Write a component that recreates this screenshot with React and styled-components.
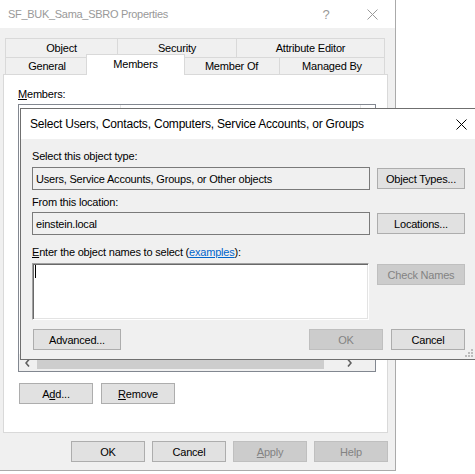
import React from "react";
import styled, { createGlobalStyle, css } from "styled-components";

const GlobalStyle = createGlobalStyle`
  html, body {
    margin: 0;
    padding: 0;
    background: #fff;
  }
  body {
    font-family: "Liberation Sans", Arial, sans-serif;
    font-size: 11px;
    letter-spacing: -0.2px;
    color: #000;
  }
`;

const Desktop = styled.div`
  position: relative;
  width: 475px;
  height: 474px;
  overflow: hidden;
  background: #fff;
`;

/* ---------- window chrome ---------- */

const PropertiesWindow = styled.div`
  position: absolute;
  left: 0;
  top: 0;
  width: 396px;
  height: 471px;
  box-sizing: border-box;
  background: #f0f0f0;
  border-right: 1px solid #aaaaaa;
  border-bottom: 1px solid #aaaaaa;
  display: flex;
  flex-direction: column;
`;

const PickerWindow = styled.div`
  position: absolute;
  left: 20px;
  top: 108px;
  width: 456px;
  height: 252px;
  box-sizing: border-box;
  background: #f0f0f0;
  border: 1px solid #6f6f6f;
  display: flex;
  flex-direction: column;
  z-index: 5;
`;

const TitleBar = styled.div`
  flex: none;
  height: ${(p) => p.$height}px;
  background: #fff;
  display: flex;
  align-items: center;
  padding-left: ${(p) => p.$pad}px;
  color: ${(p) => (p.$inactive ? "#999999" : "#000")};
  font-size: ${(p) => (p.$inactive ? "11px" : "12px")};
  letter-spacing: ${(p) => (p.$inactive ? "-0.3px" : "-0.2px")};
`;

const TitleText = styled.div`
  flex: 1;
  white-space: nowrap;
  overflow: hidden;
`;

const CaptionButton = styled.div`
  width: ${(p) => p.$w}px;
  height: 100%;
  display: flex;
  align-items: center;
  justify-content: center;
  color: #999999;
  font-size: 13px;
`;

const CloseIcon = ({ color }) => (
  <svg width="11" height="11" viewBox="0 0 11 11">
    <path d="M0.5 0.5 L10.5 10.5 M10.5 0.5 L0.5 10.5" stroke={color} strokeWidth="1" fill="none" />
  </svg>
);

/* ---------- property sheet ---------- */

const SheetBody = styled.div`
  flex: 1;
  display: flex;
  flex-direction: column;
  padding: 10px 7px 0 3px;
`;

const TabStrip = styled.div`
  margin: 0 2px;
  display: flex;
  flex-direction: column;
  position: relative;
  z-index: 1;
`;

const TabRow = styled.div`
  display: flex;
  height: ${(p) => p.$h}px;
  align-items: flex-start;
`;

const Tab = styled.div`
  box-sizing: border-box;
  width: ${(p) => p.$w}px;
  height: 100%;
  border-top: 1px solid #d9d9d9;
  border-left: 1px solid #d9d9d9;
  background: #f0f0f0;
  display: flex;
  align-items: center;
  justify-content: center;
  white-space: nowrap;
  &:last-child {
    border-right: 1px solid #d9d9d9;
  }
  ${(p) =>
    p.$active &&
    css`
      width: ${p.$w + 4}px;
      height: calc(100% + 4px);
      margin: -3px -2px 0;
      padding-bottom: 2px;
      background: #fff;
      border-right: 1px solid #d9d9d9;
      position: relative;
      z-index: 2;
    `}
`;

const TabPanel = styled.div`
  height: 359px;
  box-sizing: border-box;
  background: #fff;
  border: 1px solid #d9d9d9;
  padding: 13px 0 0 14px;
  display: flex;
  flex-direction: column;
`;

const Label = styled.div`
  height: 13px;
  line-height: 13px;
  white-space: nowrap;
  margin-top: ${(p) => p.$top || 0}px;
`;

const ListBox = styled.div`
  margin-top: 3px;
  width: 358px;
  height: 268px;
  box-sizing: border-box;
  border: 1px solid #828790;
  background: #fff;
  display: flex;
  flex-direction: column;
`;

const ListHeader = styled.div`
  height: 24px;
  flex: none;
  display: flex;
`;

const HeaderCell = styled.div`
  width: ${(p) => p.$w}px;
  box-sizing: border-box;
  border-right: 1px solid #e5e5e5;
`;

const ListRows = styled.div`
  flex: 1;
`;

const HScrollBar = styled.div`
  height: 17px;
  flex: none;
  display: flex;
  background: #f0f0f0;
`;

const ScrollArrow = styled.div`
  width: 17px;
  flex: none;
  display: flex;
  align-items: center;
  justify-content: center;
`;

const ScrollTrack = styled.div`
  flex: 1;
  display: flex;
  align-items: center;
`;

const ScrollThumb = styled.div`
  margin-left: 1px;
  width: 287px;
  height: 13px;
  background: #cdcdcd;
`;

const ScrollCorner = styled.div`
  width: 17px;
  flex: none;
  background: #f0f0f0;
`;

const Chevron = ({ dir }) => (
  <svg width="5" height="8" viewBox="0 0 5 8">
    <path
      d={dir === "left" ? "M4 0.5 L1 4 L4 7.5" : "M1 0.5 L4 4 L1 7.5"}
      stroke="#606060"
      strokeWidth="1.6"
      fill="none"
    />
  </svg>
);

const ButtonRow = styled.div`
  display: flex;
  gap: ${(p) => p.$gap}px;
  margin-top: ${(p) => p.$top || 0}px;
  margin-left: ${(p) => p.$left || 0}px;
  justify-content: ${(p) => p.$justify || "flex-start"};
`;

const Button = styled.div`
  box-sizing: border-box;
  width: ${(p) => p.$w || 74}px;
  height: 21px;
  flex: none;
  display: flex;
  align-items: center;
  justify-content: center;
  white-space: nowrap;
  background: ${(p) => (p.$disabled ? "#cccccc" : "#e1e1e1")};
  border: 1px solid ${(p) => (p.$disabled ? "#bfbfbf" : "#adadad")};
  color: ${(p) => (p.$disabled ? "#838383" : "#000")};
  margin-top: ${(p) => p.$top || 0}px;
  margin-left: ${(p) => p.$left || 0}px;
`;

/* ---------- object picker ---------- */

const PickerBody = styled.div`
  flex: 1;
  position: relative;
  padding: 11px 10px 0 11px;
  display: flex;
  flex-direction: column;
`;

const FieldRow = styled.div`
  display: flex;
  gap: 7px;
  align-items: ${(p) => p.$align || "center"};
  margin-top: ${(p) => p.$top || 0}px;
`;

const ReadOnlyBox = styled.div`
  box-sizing: border-box;
  width: 338px;
  height: 23px;
  border: 1px solid #7a7a7a;
  background: #f0f0f0;
  padding-left: 3px;
  display: flex;
  align-items: center;
  white-space: nowrap;
`;

const NamesBox = styled.div`
  box-sizing: border-box;
  width: 337px;
  height: 57px;
  background: #fff;
  border: 1px solid;
  border-color: #a0a0a0 #ffffff #ffffff #a0a0a0;
  box-shadow: inset 1px 1px 0 #696969, inset -1px -1px 0 #e3e3e3;
`;

const Caret = styled.div`
  width: 1px;
  height: 13px;
  margin: 1px 0 0 2px;
  background: #000;
`;

const Link = styled.span`
  color: #0066cc;
  text-decoration: underline;
`;

const Footer = styled.div`
  display: flex;
  justify-content: space-between;
  margin-top: 9px;
`;

const Grip = styled.svg`
  position: absolute;
  right: 1px;
  bottom: 1px;
`;

const ResizeGrip = () => (
  <Grip width="9" height="9" viewBox="0 0 9 9">
    {[
      [6, 0],
      [3, 3],
      [6, 3],
      [0, 6],
      [3, 6],
      [6, 6],
    ].map(([x, y]) => (
      <rect key={`${x}-${y}`} x={x} y={y} width="2" height="2" fill="#bcbcbc" />
    ))}
  </Grip>
);

const backTabs = [
  { name: "Object", w: 112 },
  { name: "Security", w: 119 },
  { name: "Attribute Editor", w: 149 },
];

const frontTabs = [
  { name: "General", w: 83 },
  { name: "Members", w: 95, active: true },
  { name: "Member Of", w: 96 },
  { name: "Managed By", w: 106 },
];

export default function App() {
  return (
    <>
      <GlobalStyle />
      <Desktop>
        <PropertiesWindow>
          <TitleBar $height={28} $pad={8} $inactive>
            <TitleText>SF_BUK_Sama_SBRO Properties</TitleText>
            <CaptionButton $w={46}>?</CaptionButton>
            <CaptionButton $w={46}>
              <CloseIcon color="#999999" />
            </CaptionButton>
          </TitleBar>
          <SheetBody>
            <TabStrip>
              <TabRow $h={19}>
                {backTabs.map((t) => (
                  <Tab key={t.name} $w={t.w}>
                    {t.name}
                  </Tab>
                ))}
              </TabRow>
              <TabRow $h={17}>
                {frontTabs.map((t) => (
                  <Tab key={t.name} $w={t.w} $active={t.active}>
                    {t.name}
                  </Tab>
                ))}
              </TabRow>
            </TabStrip>
            <TabPanel>
              <Label>
                <u>M</u>embers:
              </Label>
              <ListBox>
                <ListHeader>
                  <HeaderCell $w={102} />
                  <HeaderCell $w={240} />
                </ListHeader>
                <ListRows />
                <HScrollBar>
                  <ScrollArrow>
                    <Chevron dir="left" />
                  </ScrollArrow>
                  <ScrollTrack>
                    <ScrollThumb />
                  </ScrollTrack>
                  <ScrollArrow>
                    <Chevron dir="right" />
                  </ScrollArrow>
                  <ScrollCorner />
                </HScrollBar>
              </ListBox>
              <ButtonRow $gap={8} $top={11} $left={1}>
                <Button>
                  A<u>d</u>d...
                </Button>
                <Button>
                  <u>R</u>emove
                </Button>
              </ButtonRow>
            </TabPanel>
            <ButtonRow $gap={7} $top={8} $justify="flex-end">
              <Button>OK</Button>
              <Button>Cancel</Button>
              <Button $disabled>
                <u>A</u>pply
              </Button>
              <Button $disabled>Help</Button>
            </ButtonRow>
          </SheetBody>
        </PropertiesWindow>

        <PickerWindow>
          <TitleBar $height={30} $pad={9}>
            <TitleText>Select Users, Contacts, Computers, Service Accounts, or Groups</TitleText>
            <CaptionButton $w={28}>
              <CloseIcon color="#000" />
            </CaptionButton>
          </TitleBar>
          <PickerBody>
            <Label>Select this object type:</Label>
            <FieldRow $top={4}>
              <ReadOnlyBox>Users, Service Accounts, Groups, or Other objects</ReadOnlyBox>
              <Button $w={88}>Object Types...</Button>
            </FieldRow>
            <Label $top={6}>From this location:</Label>
            <FieldRow $top={3}>
              <ReadOnlyBox>einstein.local</ReadOnlyBox>
              <Button $w={88}>Locations...</Button>
            </FieldRow>
            <Label $top={11}>
              <u>E</u>nter the object names to select (<Link>examples</Link>):
            </Label>
            <FieldRow $top={4} $align="flex-start">
              <NamesBox>
                <Caret />
              </NamesBox>
              <Button $w={88} $top={1} $left={1} $disabled>
                Check Names
              </Button>
            </FieldRow>
            <Footer>
              <Button $w={88} $left={1}>
                Advanced...
              </Button>
              <ButtonRow $gap={8}>
                <Button $disabled>OK</Button>
                <Button>Cancel</Button>
              </ButtonRow>
            </Footer>
            <ResizeGrip />
          </PickerBody>
        </PickerWindow>
      </Desktop>
    </>
  );
}
